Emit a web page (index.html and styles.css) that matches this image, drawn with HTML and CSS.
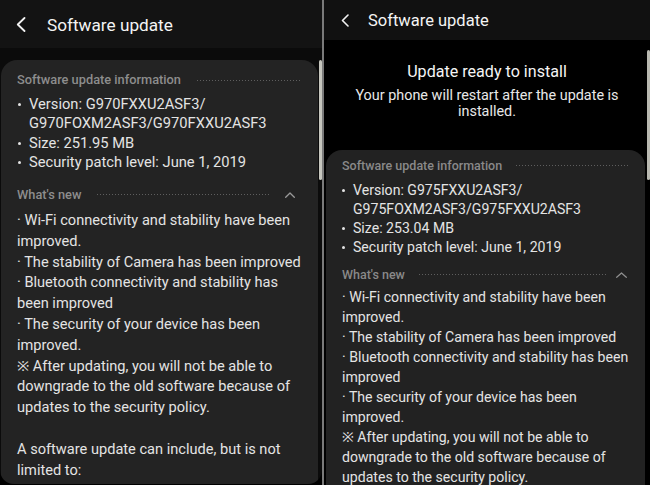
FILE: index.html
```html
<!DOCTYPE html>
<html lang="en">
<head>
<meta charset="utf-8">
<title>Software update</title>
<link rel="stylesheet" href="styles.css">
</head>
<body>
<main class="page">
  <section class="screen screen-a">
    <header class="appbar">
      <svg class="back" width="10" height="15" viewBox="0 0 10 15"><path d="M8.5 1 L1.8 7.5 L8.5 14" fill="none" stroke="#f2f2f2" stroke-width="1.8" stroke-linecap="round" stroke-linejoin="round"/></svg>
      <h1 class="title">Software update</h1>
    </header>
    <div class="card">
      <div class="section-head">
        <span class="label">Software update information</span>
        <span class="dots"></span>
      </div>
      <ul class="facts">
        <li><span class="dot"></span><span>Version: G970FXXU2ASF3/<br>G970FOXM2ASF3/G970FXXU2ASF3</span></li>
        <li><span class="dot"></span><span>Size: 251.95 MB</span></li>
        <li><span class="dot"></span><span>Security patch level: June 1, 2019</span></li>
      </ul>
      <div class="section-head whatsnew">
        <span class="label">What's new</span>
        <span class="dots"></span>
        <svg class="chev-up" width="10" height="6" viewBox="0 0 10 6"><path d="M0.7 5.3 L5 1 L9.3 5.3" fill="none" stroke="#9a9a9a" stroke-width="1.3" stroke-linecap="round" stroke-linejoin="round"/></svg>
      </div>
      <div class="notes">
        <p>· Wi-Fi connectivity and stability have been<br>improved.</p>
        <p>· The stability of Camera has been improved</p>
        <p>· Bluetooth connectivity and stability has<br>been improved</p>
        <p>· The security of your device has been<br>improved.</p>
        <p>※ After updating, you will not be able to<br>downgrade to the old software because of<br>updates to the security policy.</p>
        <p class="para">A software update can include, but is not<br>limited to:</p>
        <p>· Device stability improvements, bug fixes.</p>
      </div>
    </div>
    <div class="scrollbar"></div>
  </section>
  <div class="divider"></div>
  <section class="screen screen-b">
    <header class="appbar">
      <svg class="back" width="8" height="13" viewBox="0 0 8 13"><path d="M7 1 L1.5 6.5 L7 12" fill="none" stroke="#f2f2f2" stroke-width="1.6" stroke-linecap="round" stroke-linejoin="round"/></svg>
      <h1 class="title">Software update</h1>
    </header>
    <div class="ready">
      <h2 class="ready-title">Update ready to install</h2>
      <p class="ready-sub">Your phone will restart after the update is<br>installed.</p>
    </div>
    <div class="card">
      <div class="section-head">
        <span class="label">Software update information</span>
        <span class="dots"></span>
      </div>
      <ul class="facts">
        <li><span class="dot"></span><span>Version: G975FXXU2ASF3/<br>G975FOXM2ASF3/G975FXXU2ASF3</span></li>
        <li><span class="dot"></span><span>Size: 253.04 MB</span></li>
        <li><span class="dot"></span><span>Security patch level: June 1, 2019</span></li>
      </ul>
      <div class="section-head whatsnew">
        <span class="label">What's new</span>
        <span class="dots"></span>
        <svg class="chev-up" width="11" height="6" viewBox="0 0 11 6"><path d="M0.7 5.3 L5.5 1 L10.3 5.3" fill="none" stroke="#8f8f8f" stroke-width="1.2" stroke-linecap="round" stroke-linejoin="round"/></svg>
      </div>
      <div class="notes">
        <p>· Wi-Fi connectivity and stability have been<br>improved.</p>
        <p>· The stability of Camera has been improved</p>
        <p>· Bluetooth connectivity and stability has been<br>improved</p>
        <p>· The security of your device has been<br>improved.</p>
        <p>※ After updating, you will not be able to<br>downgrade to the old software because of<br>updates to the security policy.</p>
      </div>
    </div>
    <div class="scrollbar"></div>
  </section>
</main>
</body>
</html>
```

FILE: styles.css
```css
* { box-sizing: border-box; margin: 0; padding: 0; }
html, body { width: 650px; height: 485px; background: #000; overflow: hidden; }
body { font-family: Roboto, "Noto Sans", "DejaVu Sans", "Noto Sans CJK JP", sans-serif; color: #e4e4e4; }

.page { display: flex; height: 485px; }
.screen { position: relative; overflow: hidden; }
.screen-a { width: 322px; height: 484px; background: #0b0b0b; border-radius: 0 0 14px 14px; }
.divider { width: 2px; background: #7a7a7a; }
.screen-b { flex: 1; height: 485px; background: #000; }

.appbar { display: flex; align-items: center; background: #131313; color: #f4f4f4; }
.title { font-weight: 400; white-space: nowrap; }
.screen-a .appbar { height: 48px; padding-left: 16px; gap: 21px; }
.screen-a .title { font-size: 17.2px; padding-top: 2px; }
.screen-b .appbar { height: 40px; padding-left: 17px; gap: 19px; background: #111; }
.screen-b .title { font-size: 16.5px; padding-top: 1px; }

.card { background: #232323; border-radius: 16px 16px 0 0; white-space: nowrap; }
.screen-a .card { margin: 12px 0 0 1px; width: 317px; padding: 12px 18px 0 16px; }
.screen-b .card { margin: 0 0 0 2px; width: 319px; padding: 8px 16px 0 16px; background: #222; }

.section-head { display: flex; align-items: center; }
.label { color: #8d8d8d; font-weight: 500; }
.dots { flex: 1; height: 1px; background-image: linear-gradient(to right, #5e5e5e 1px, transparent 1px); background-size: 3px 1px; }
.screen-a .section-head { font-size: 12.8px; line-height: 16px; }
.screen-a .dots { margin-left: 16px; }
.screen-a .whatsnew { margin-top: 14.4px; }
.screen-a .chev-up { margin: 0 5px 0 14px; }
.screen-b .section-head { font-size: 12.5px; line-height: 15px; }
.screen-b .label { color: #898989; }
.screen-b .dots { margin-left: 14px; }
.screen-b .whatsnew { margin-top: 10.5px; }
.screen-b .chev-up { margin: 0 2px 0 10px; }

.facts { list-style: none; }
.facts li { display: flex; align-items: flex-start; }
.dot { width: 3px; height: 3px; border-radius: 50%; background: #e4e4e4; flex: none; margin-right: 8px; }
.screen-a .facts { margin-top: 6.6px; font-size: 14.7px; line-height: 19.5px; }
.screen-a .dot { margin-top: 8px; margin-left: 1px; }
.screen-b .facts { margin-top: 7.5px; font-size: 14.1px; line-height: 19px; }
.screen-b .dot { margin-top: 8px; margin-right: 8px; }

.screen-a .notes { margin-top: 7px; font-size: 14.6px; line-height: 20.8px; }
.screen-a .notes .para { margin-top: 20.8px; }
.screen-b .notes { margin-top: 5px; font-size: 14.1px; line-height: 20px; }

.ready { height: 110px; padding-top: 21.5px; text-align: center; white-space: nowrap; }
.ready-title { font-size: 16.1px; line-height: 20px; font-weight: 400; color: #f5f5f5; }
.ready-sub { margin-top: 6.3px; font-size: 14.4px; line-height: 16.5px; color: #e8e8e8; }

.scrollbar { position: absolute; right: 0; border-radius: 2px; }
.screen-a .scrollbar { top: 60px; width: 3.5px; height: 120px; background: #c6c6be; }
.screen-b .scrollbar { top: 50px; width: 3px; height: 130px; background: #b9b9b1; }
```
